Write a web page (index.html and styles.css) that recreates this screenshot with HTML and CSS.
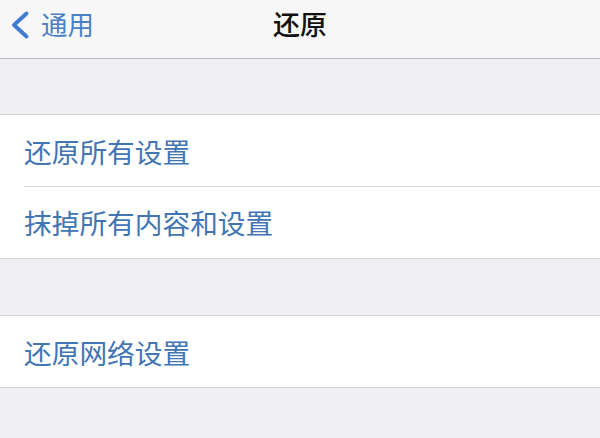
FILE: index.html
```html
<!DOCTYPE html>
<html lang="zh-CN">
<head>
<meta charset="utf-8">
<link rel="stylesheet" href="styles.css">
</head>
<body>
<div class="page">
  <header class="nav">
    <div class="back">
      <svg class="chev" width="22" height="28" viewBox="0 0 22 28"><path d="M18.5 2.5 L6 14 L18.5 25.5" fill="none" stroke="#3f7bd2" stroke-width="3.8" stroke-linecap="round" stroke-linejoin="round"/></svg>
      <span class="back-text">通用</span>
    </div>
    <div class="title">还原</div>
  </header>
  <div class="gap gap1"></div>
  <section class="group">
    <div class="row"><span class="label">还原所有设置</span></div>
    <div class="row sep"><span class="label">抹掉所有内容和设置</span></div>
  </section>
  <div class="gap gap2"></div>
  <section class="group">
    <div class="row"><span class="label">还原网络设置</span></div>
  </section>
  <div class="gap rest"></div>
</div>
</body>
</html>
```
FILE: styles.css
```css
* { box-sizing: border-box; }
html, body { margin: 0; padding: 0; }
body {
  width: 600px;
  height: 438px;
  overflow: hidden;
  background: #efeff4;
  font-family: "Noto Sans CJK SC", "Noto Sans", sans-serif;
}
.page { display: flex; flex-direction: column; height: 438px; }
.nav {
  height: 59px;
  flex: none;
  background: #f7f7f8;
  border-bottom: 1px solid #bcbcc0;
  display: grid;
  grid-template-columns: 1fr auto 1fr;
  align-items: start;
  padding-top: 5px;
}
.back {
  display: flex;
  align-items: center;
  padding-left: 8px;
  gap: 11px;
  color: #4a80c4;
  font-size: 26.5px;
  line-height: 38px;
}
.chev { display: block; margin-top: 2px; }
.title {
  font-size: 27px;
  line-height: 38px;
  font-weight: 500;
  color: #111;
}
.gap { flex: none; }
.gap1 { height: 55px; }
.gap2 { height: 56px; }
.rest { flex: 1; }
.group {
  background: #fff;
  border-top: 1px solid #d3d3d7;
  border-bottom: 1px solid #d3d3d7;
}
.row {
  height: 71px;
  display: flex;
  align-items: center;
  padding-left: 24px;
  position: relative;
}
.row.sep { height: 72px; }
.row.sep::before {
  content: "";
  position: absolute;
  left: 24px;
  right: 0;
  top: 0;
  height: 1px;
  background: #d9d9dc;
}
.label {
  font-size: 27.7px;
  color: #4275b3;
  line-height: 36px;
}
```
